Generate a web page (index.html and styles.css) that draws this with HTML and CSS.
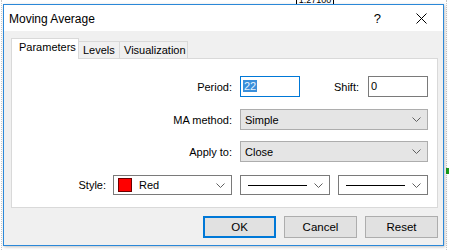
FILE: index.html
```html
<!DOCTYPE html>
<html>
<head>
<meta charset="utf-8">
<link rel="stylesheet" href="styles.css">
</head>
<body>
<div class="chart">
  <div class="price-tag">1.27100</div>
  <div class="grid-v gv1"></div>
  <div class="grid-v gv2"></div>
  <div class="green-mark"></div>
</div>
<div class="dialog">
  <div class="titlebar">
    <span class="title">Moving Average</span>
    <span class="help">?</span>
    <svg class="close" width="11" height="11" viewBox="0 0 11 11"><path d="M0.5 0.5 L10.5 10.5 M10.5 0.5 L0.5 10.5" stroke="#000" stroke-width="1" fill="none"/></svg>
  </div>
  <div class="body">
    <div class="tabs">
      <div class="tab active">Parameters</div>
      <div class="tab">Levels</div>
      <div class="tab">Visualization</div>
    </div>
    <div class="panel">
      <div class="row r1">
        <label class="lbl main">Period:</label>
        <div class="input focus w60"><span class="sel">22</span></div>
        <label class="lbl shift">Shift:</label>
        <div class="input w60">0</div>
      </div>
      <div class="row r2">
        <label class="lbl main">MA method:</label>
        <div class="combo grey wide"><span>Simple</span><svg class="chev" width="9" height="5" viewBox="0 0 9 5"><path d="M0.5 0.5 L4.5 4.5 L8.5 0.5" stroke="#606060" fill="none"/></svg></div>
      </div>
      <div class="row r3">
        <label class="lbl main">Apply to:</label>
        <div class="combo grey wide"><span>Close</span><svg class="chev" width="9" height="5" viewBox="0 0 9 5"><path d="M0.5 0.5 L4.5 4.5 L8.5 0.5" stroke="#606060" fill="none"/></svg></div>
      </div>
      <div class="row r4">
        <label class="lbl style">Style:</label>
        <div class="combo white w119"><span class="swatch"></span><span>Red</span><svg class="chev" width="9" height="5" viewBox="0 0 9 5"><path d="M0.5 0.5 L4.5 4.5 L8.5 0.5" stroke="#606060" fill="none"/></svg></div>
        <div class="combo white w90"><span class="line"></span><svg class="chev" width="9" height="5" viewBox="0 0 9 5"><path d="M0.5 0.5 L4.5 4.5 L8.5 0.5" stroke="#606060" fill="none"/></svg></div>
        <div class="combo white w90"><span class="line"></span><svg class="chev" width="9" height="5" viewBox="0 0 9 5"><path d="M0.5 0.5 L4.5 4.5 L8.5 0.5" stroke="#606060" fill="none"/></svg></div>
      </div>
    </div>
    <div class="buttons">
      <div class="btn default">OK</div>
      <div class="btn">Cancel</div>
      <div class="btn">Reset</div>
    </div>
  </div>
</div>
</body>
</html>
```
FILE: styles.css
```css
html, body {
  margin: 0;
  padding: 0;
}
body {
  width: 449px;
  height: 250px;
  background: #ffffff;
  position: relative;
  overflow: hidden;
  font-family: "Liberation Sans", Arial, sans-serif;
  font-size: 11px;
  color: #000;
}
.chart {
  position: absolute;
  inset: 0;
}
.price-tag {
  position: absolute;
  left: 296px;
  top: -6px;
  width: 36px;
  height: 11px;
  border: 1px solid #000;
  font-size: 9px;
  line-height: 10px;
  text-align: center;
  background: #fff;
}
.grid-v {
  position: absolute;
  top: 0;
  bottom: 0;
  width: 0;
  border-left: 1px dotted #c8c8c8;
}
.gv1 { left: 1px; }
.gv2 { left: 446px; }
.green-mark {
  position: absolute;
  left: 446px;
  top: 168px;
  width: 3px;
  height: 6px;
  background: #1a9a1a;
}
.dialog {
  position: absolute;
  left: 3px;
  top: 4px;
  width: 439px;
  height: 240px;
  border: 1px solid #2b88d8;
  background: #f0f0f0;
  box-shadow: 1px 1px 3px rgba(0,0,0,0.25);
  display: flex;
  flex-direction: column;
}
.titlebar {
  height: 26px;
  background: #fff;
  display: flex;
  align-items: center;
  padding-left: 5px;
  box-sizing: border-box;
}
.title {
  font-size: 12px;
  flex: 1;
  padding-top: 1px;
}
.help {
  font-size: 13px;
  margin-right: 35px;
}
.close {
  margin-right: 16px;
}
.body {
  flex: 1;
  padding: 7px 5px 0 7px;
  display: flex;
  flex-direction: column;
}
.tabs {
  display: flex;
  align-items: flex-end;
  height: 20px;
  position: relative;
  z-index: 1;
}
.tab {
  height: 17px;
  border: 1px solid #d9d9d9;
  border-bottom: none;
  border-left: none;
  background: #f0f0f0;
  box-sizing: border-box;
  line-height: 16px;
  padding: 0 4px 0 4px;
}
.tab.active {
  height: 21px;
  margin-bottom: -1px;
  background: #fff;
  border-left: 1px solid #d9d9d9;
  padding: 0 7px 0 7px;
  line-height: 17px;
}
.tabs .tab:nth-child(2) { width: 41px; }
.tabs .tab:nth-child(3) { width: 68px; }
.tabs .tab.active { width: 68px; }
.panel {
  height: 150px;
  box-sizing: border-box;
  background: #fff;
  border: 1px solid #d9d9d9;
  width: 427px;
  padding: 17px 0 0 0;
  display: flex;
  flex-direction: column;
}
.row {
  display: flex;
  align-items: center;
  height: 21px;
}
.r2 { margin-top: 12px; height: 21px; }
.r3 { margin-top: 11px; }
.r4 { margin-top: 13px; height: 20px; }
.lbl {
  text-align: right;
  box-sizing: border-box;
}
.lbl.main {
  width: 220px;
  margin-right: 8px;
}
.lbl.shift {
  width: 59px;
  margin-right: 9px;
}
.lbl.style {
  width: 94px;
  margin-right: 7px;
}
.input {
  height: 21px;
  box-sizing: border-box;
  border: 1px solid #7a7a7a;
  background: #fff;
  line-height: 18px;
  padding-left: 2px;
}
.input.focus {
  border-color: #0078d7;
}
.w60 { width: 60px; }
.sel {
  background: #3a8fda;
  color: #e8f2fc;
  padding: 0 1px;
}
.combo {
  height: 100%;
  box-sizing: border-box;
  display: flex;
  align-items: center;
  position: relative;
  padding-left: 4px;
}
.combo.grey {
  background: #e5e5e5;
  border: 1px solid #adadad;
}
.combo.white {
  background: #fff;
  border: 1px solid #7a7a7a;
  margin-right: 8px;
}
.combo .chev {
  position: absolute;
  right: 6px;
  top: 7px;
}
.wide { width: 188px; }
.w119 { width: 119px; }
.w90 { width: 90px; }
.swatch {
  width: 12px;
  height: 12px;
  background: #ff0000;
  border: 1px solid #6b0000;
  margin-right: 7px;
}
.line {
  display: block;
  width: 59px;
  height: 1px;
  background: #000;
  margin-left: 3px;
}
.buttons {
  display: flex;
  justify-content: flex-end;
  gap: 8px;
  padding-top: 8px;
  padding-right: 0;
}
.btn {
  width: 73px;
  height: 22px;
  box-sizing: border-box;
  background: #e1e1e1;
  border: 1px solid #adadad;
  text-align: center;
  line-height: 20px;
  font-size: 11.5px;
}
.btn.default {
  border: 2px solid #0078d7;
  line-height: 18px;
}
```
